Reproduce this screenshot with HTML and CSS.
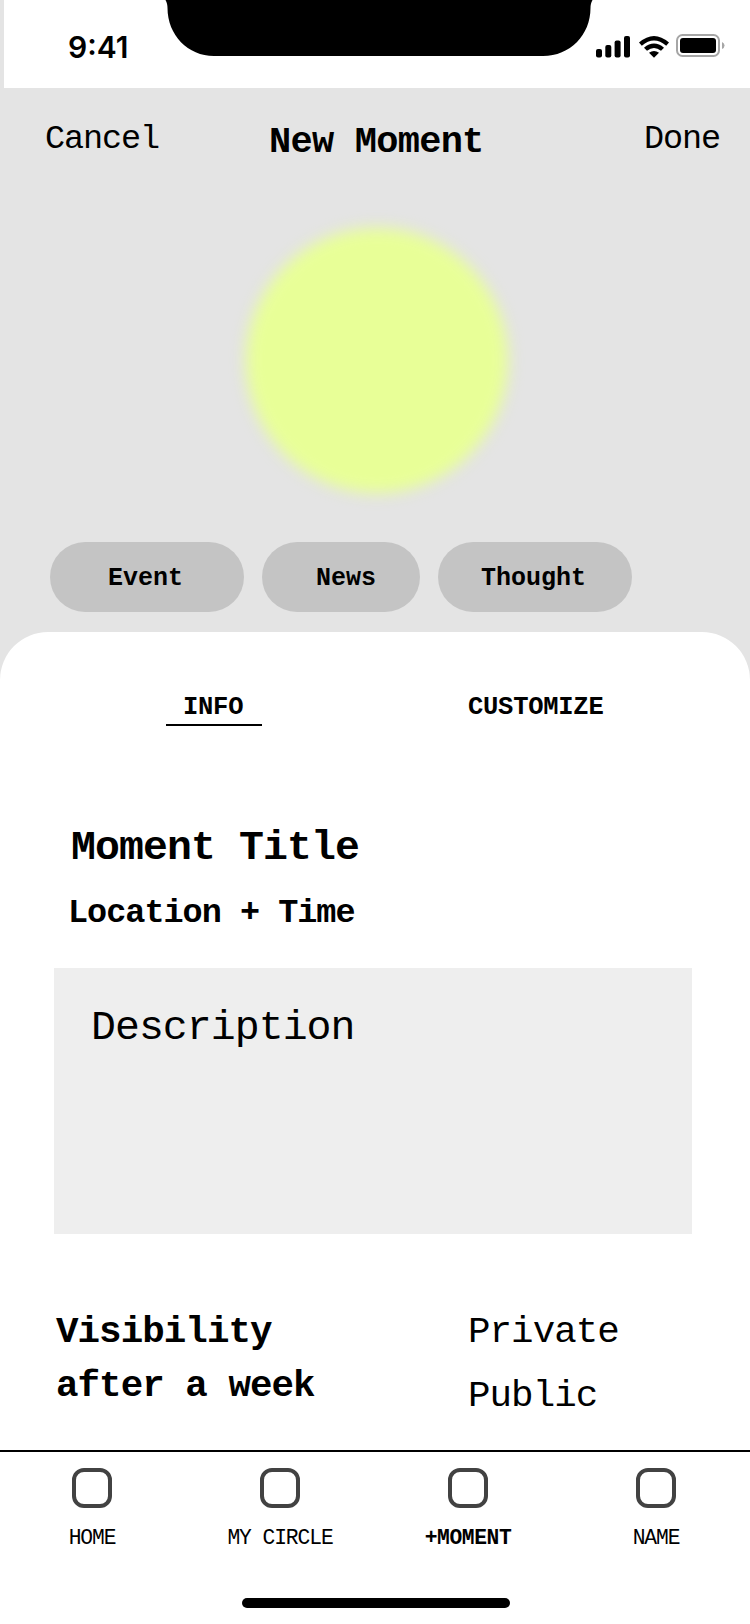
FILE: index.html
```html
<!DOCTYPE html>
<html lang="en">
<head>
<meta charset="utf-8">
<title>New Moment</title>
<link rel="stylesheet" href="styles.css">
</head>
<body>
<div class="screen">
  <div class="status">
    <span class="time">9:41</span>
    <svg class="notch" width="430" height="56" viewBox="0 0 430 56"><path d="M1.500 0H428.500C427 3 426.500 5 426.500 8C426.500 35 406 56 379 56H50C24 56 3.500 35 3.500 8C3.500 5 3 3 1.500 0Z"/></svg>
    <svg class="signals" width="130" height="26" viewBox="0 0 130 26">
      <rect x="0" y="15" width="6" height="8.500" rx="2"/>
      <rect x="9.300" y="11" width="6" height="12.500" rx="2"/>
      <rect x="18.600" y="6.500" width="6" height="17" rx="2"/>
      <rect x="28" y="2" width="6" height="21.500" rx="2"/>
      <path d="M43 8.600Q58 -4.600 73 8.600L70.200 11.700Q58 1.400 45.800 11.700Z"/>
      <path d="M48 13.700Q58 5.300 68 13.700L65 16.800Q58 11.400 51 16.800Z"/>
      <path d="M53 18.700Q58 15.300 63 18.700L58 23.800Z"/>
      <rect x="81" y="1" width="42" height="21" rx="5.500" fill="none" stroke="#a6a6a6" stroke-width="2"/>
      <rect x="84" y="4" width="36" height="15" rx="3"/>
      <path d="M126 8Q128.500 9 128.500 11.500Q128.500 14 126 15Z" fill="#a6a6a6"/>
    </svg>
  </div>
  <header class="header">
    <span class="action">Cancel</span>
    <h1 class="heading">New Moment</h1>
    <span class="action">Done</span>
  </header>
  <div class="preview"><div class="orb"></div></div>
  <div class="chips">
    <span class="chip chip-event">Event</span>
    <span class="chip chip-news">News</span>
    <span class="chip chip-thought">Thought</span>
  </div>
  <main class="sheet">
    <div class="tabs">
      <span class="tab tab-active">INFO</span>
      <span class="tab">CUSTOMIZE</span>
    </div>
    <h2 class="title">Moment Title</h2>
    <p class="place">Location + Time</p>
    <div class="description">Description</div>
    <div class="visibility">
      <p class="question">Visibility<br>after a week</p>
      <p class="options">Private<br>Public</p>
    </div>
  </main>
  <nav class="nav">
    <div class="item"><i class="box"></i><span class="label">HOME</span></div>
    <div class="item"><i class="box"></i><span class="label">MY CIRCLE</span></div>
    <div class="item"><i class="box"></i><span class="label label-active">+MOMENT</span></div>
    <div class="item"><i class="box"></i><span class="label">NAME</span></div>
  </nav>
  <footer class="footer"><div class="home-bar"></div></footer>
</div>
</body>
</html>
```
FILE: styles.css
```css
* { box-sizing: border-box; }
body { margin: 0; background: #fff; }
h1, h2, p { margin: 0; }

.screen {
  width: 750px;
  height: 1624px;
  overflow: hidden;
  display: flex;
  flex-direction: column;
  background: #e4e4e4;
  color: #000;
  font-family: "Liberation Mono", monospace;
  white-space: nowrap;
}

.status {
  display: flex;
  align-items: flex-start;
  height: 88px;
  margin-left: 4px;
  background: #fff;
}
.time {
  width: 160px;
  padding: 29px 0 0 64px;
  font: 600 30px/36px Inter, sans-serif;
}
.signals { margin: 34px 0 0 2px; }

.header {
  display: flex;
  height: 112px;
  padding: 26px 30px 0 45px;
}
.action { font-size: 33.5px; letter-spacing: -1.1px; line-height: 51px; }
.action:first-child { width: 224px; }
.heading {
  width: 375px;
  font-size: 37px;
  letter-spacing: -0.75px;
  line-height: 57px;
}

.preview { height: 342px; padding: 28px 0 0 246px; }
.orb {
  width: 262px;
  height: 265px;
  border-radius: 50%;
  background: #e8ff97;
  filter: blur(7.5px);
}

.chips {
  display: flex;
  gap: 18px;
  height: 90px;
  padding-left: 50px;
}
.chip {
  height: 70px;
  width: 194px;
  border-radius: 35px;
  background: #c4c4c4;
  font-size: 25px;
  font-weight: 700;
  line-height: 74px;
}
.chip-event { padding-left: 58px; }
.chip-news { width: 158px; padding-left: 54px; }
.chip-thought { padding-left: 43px; }

.sheet {
  height: 818px;
  background: #fff;
  border-radius: 48px 48px 0 0;
}
.tabs { display: flex; padding: 58px 0 0 166px; }
.tab {
  height: 36px;
  font-size: 25.5px;
  font-weight: 700;
  letter-spacing: -0.25px;
  line-height: 35px;
}
.tab-active {
  width: 96px;
  margin-right: 206px;
  padding-left: 17px;
  border-bottom: 2px solid #000;
}
.title {
  margin: 91px 0 0 71px;
  font-size: 41.5px;
  letter-spacing: -0.9px;
  line-height: 61px;
}
.place {
  margin: 10px 0 0 68px;
  font-size: 33.5px;
  font-weight: 700;
  letter-spacing: -1px;
  line-height: 50px;
}
.description {
  width: 638px;
  height: 266px;
  margin: 30px 0 0 54px;
  padding: 29px 0 0 37px;
  background: #eee;
  font-size: 41.5px;
  letter-spacing: -0.95px;
  line-height: 61px;
}
.visibility {
  display: flex;
  padding: 71px 0 0 56px;
  font-size: 37.5px;
  letter-spacing: -0.95px;
}
.question { width: 412px; font-weight: 700; line-height: 54px; }
.options { margin-top: -5px; line-height: 64px; }

.nav {
  display: grid;
  grid-template-columns: repeat(4, 188px);
  height: 148px;
  padding-top: 16px;
  border-top: 2px solid #000;
  background: #fff;
}
.item {
  width: 184px;
  display: flex;
  flex-direction: column;
  align-items: center;
  gap: 16px;
}
.box {
  width: 40px;
  height: 40px;
  border: 4px solid #424242;
  border-radius: 12px;
}
.label { font-size: 21.3px; letter-spacing: -1.1px; line-height: 28px; }
.label-active { font-weight: 700; letter-spacing: -0.4px; }

.footer { flex: 1; padding-left: 242px; background: #fff; }
.home-bar {
  width: 268px;
  height: 10px;
  border-radius: 5px;
  background: #000;
}
```
